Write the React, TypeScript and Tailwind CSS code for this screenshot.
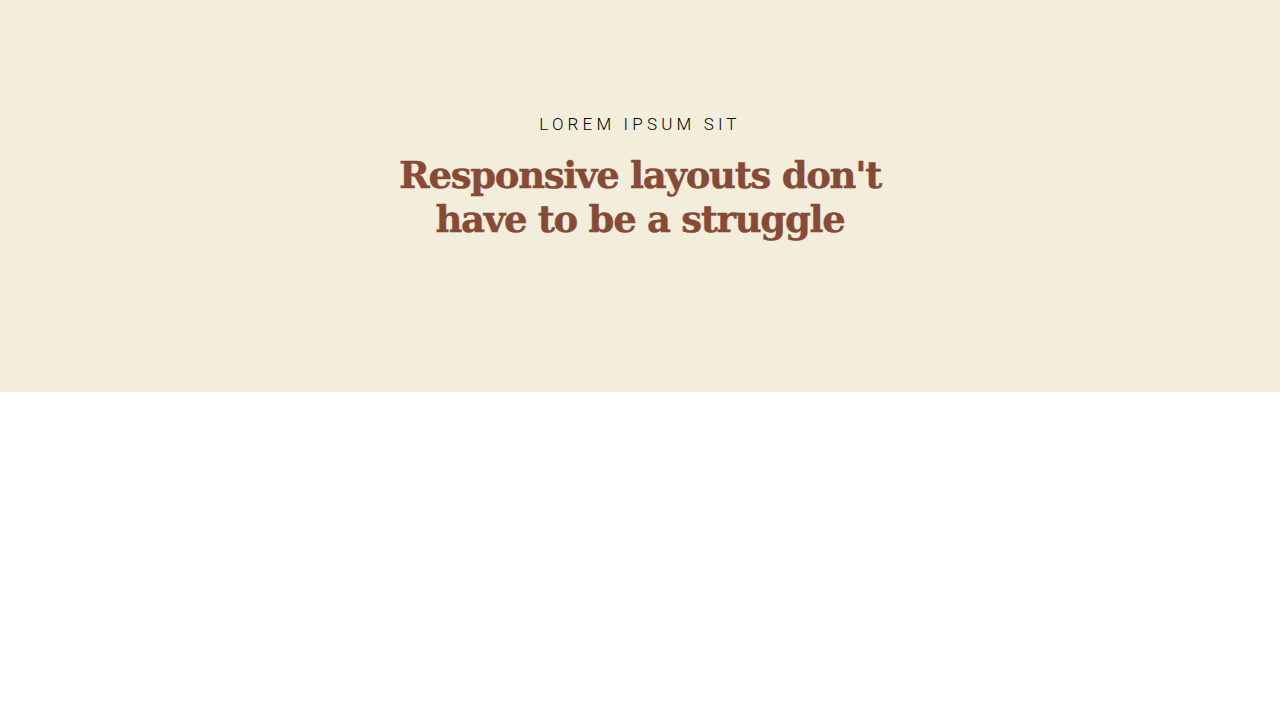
export default function App() {
  return (
    <div className="min-h-screen bg-white">
      <section className="flex h-[392px] flex-col items-center bg-[#f3eddb] pt-[112px] text-center">
        <p className="font-['Roboto',sans-serif] text-[17px] font-light uppercase tracking-[0.245em] text-black">
          Lorem ipsum sit
        </p>
        <h1 className="mt-[15px] font-['DejaVu_Serif',serif] text-[37px] font-bold leading-[44px] tracking-[-0.035em] text-[#864a37] [-webkit-text-stroke:0.4px_#864a37]">
          Responsive layouts don't
          <br />
          have to be a struggle
        </h1>
      </section>
    </div>
  )
}
